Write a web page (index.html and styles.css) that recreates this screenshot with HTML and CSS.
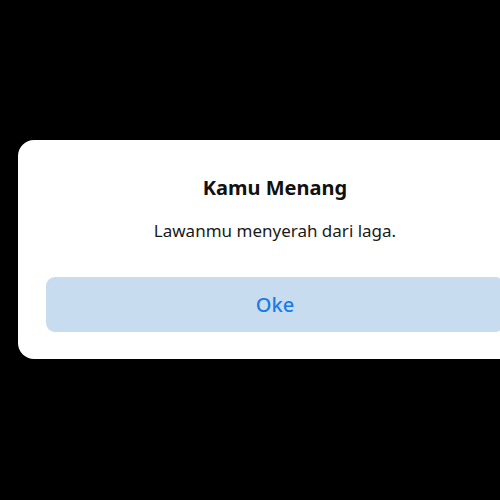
FILE: index.html
```html
<!DOCTYPE html>
<html lang="id">
<head>
<meta charset="utf-8">
<link rel="stylesheet" href="styles.css">
</head>
<body>
<div class="dialog">
  <h1 class="title">Kamu Menang</h1>
  <p class="message">Lawanmu menyerah dari laga.</p>
  <button class="ok">Oke</button>
</div>
</body>
</html>
```
FILE: styles.css
```css
html, body {
  margin: 0;
  padding: 0;
  background: #000;
  width: 500px;
  height: 500px;
  overflow: hidden;
}
body {
  font-family: "Noto Sans", "Open Sans", sans-serif;
  padding-top: 140px;
  padding-left: 18px;
  box-sizing: border-box;
}
.dialog {
  width: 514px;
  box-sizing: border-box;
  background: #fff;
  border-radius: 16px;
  padding: 36px 28px 27px;
  display: flex;
  flex-direction: column;
  align-items: stretch;
}
.title {
  margin: 0;
  font-size: 20px;
  line-height: 24px;
  font-weight: 700;
  color: #111;
  text-align: center;
}
.message {
  margin: 21px 0 0;
  font-size: 17px;
  line-height: 20px;
  color: #1a1a1a;
  text-align: center;
}
.ok {
  margin-top: 36px;
  height: 55px;
  border: none;
  border-radius: 9px;
  background: #c8dcef;
  color: #1a7be6;
  font-family: inherit;
  font-size: 20px;
  font-weight: 500;
  padding: 0;
}
```
